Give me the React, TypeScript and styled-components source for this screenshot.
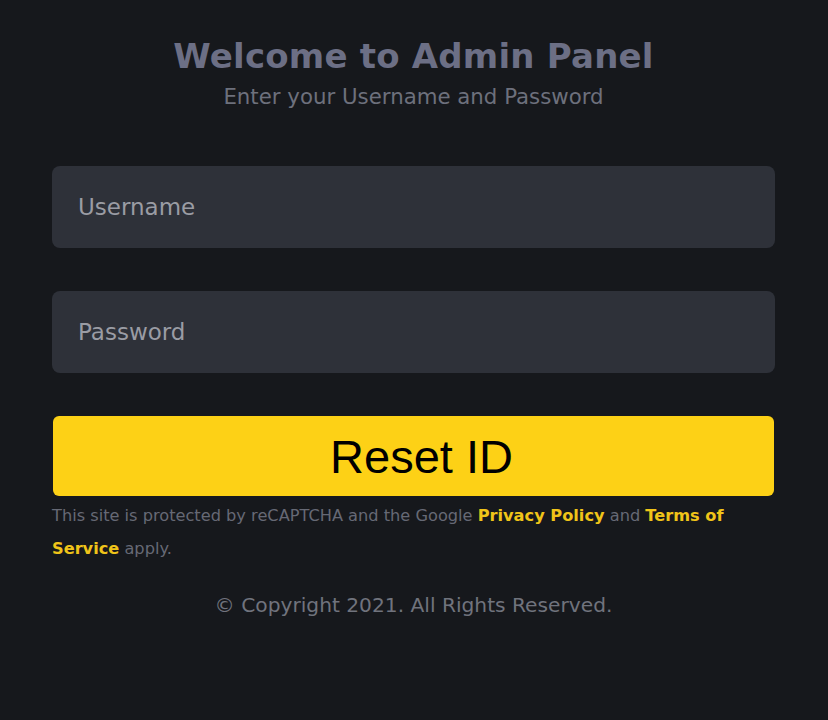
import React from "react";
import styled, { createGlobalStyle } from "styled-components";

const Global = createGlobalStyle`
  html, body { margin: 0; padding: 0; background: #16181c; }
  body { font-family: "DejaVu Sans", "Noto Sans", sans-serif; }
  * { box-sizing: border-box; }
`;

const Page = styled.div`
  min-height: 720px;
  background: #16181c;
  padding: 36px 53px 0 52px;
  display: flex;
  flex-direction: column;
`;

const Header = styled.div`
  display: flex;
  flex-direction: column;
  align-items: center;
`;

const Title = styled.h1`
  margin: 0;
  font-size: 34px;
  font-weight: 600;
  line-height: 40px;
  color: #6c6f85;
  letter-spacing: 0.2px;
`;

const Subtitle = styled.p`
  margin: 8px 0 0;
  font-size: 21.3px;
  line-height: 26px;
  color: #6d707c;
`;

const Form = styled.form`
  margin-top: 56px;
  display: flex;
  flex-direction: column;
  gap: 43px;
`;

const Input = styled.input`
  width: 100%;
  height: 82px;
  border: none;
  outline: none;
  border-radius: 8px;
  background: #2e3139;
  padding: 0 26px;
  font-family: "DejaVu Sans", sans-serif;
  font-size: 23px;
  color: #d0d2d8;
  &::placeholder { color: #9a9ca4; }
`;

const Button = styled.button`
  width: 721px;
  margin-left: 1px;
  height: 80px;
  border: none;
  border-radius: 6px;
  background: #fdd116;
  color: #000;
  padding: 0 0 0 16px;
  font-family: "Liberation Sans", Arial, sans-serif;
  font-size: 47px;
  cursor: pointer;
`;

const Notice = styled.p`
  margin: 3px 0 0;
  font-size: 16.2px;
  line-height: 33px;
  color: #666975;
  letter-spacing: 0;
`;

const Link = styled.a`
  color: #f0c419;
  font-weight: 700;
  text-decoration: none;
`;

const Copyright = styled.p`
  margin: 27px 0 0;
  text-align: center;
  font-size: 20.2px;
  line-height: 26px;
  color: #70737d;
`;

export default function App() {
  return (
    <>
      <Global />
      <Page>
        <Header>
          <Title>Welcome to Admin Panel</Title>
          <Subtitle>Enter your Username and Password</Subtitle>
        </Header>
        <Form onSubmit={(e) => e.preventDefault()}>
          <Input placeholder="Username" />
          <Input placeholder="Password" type="password" />
          <Button type="submit">Reset ID</Button>
        </Form>
        <Notice>
          This site is protected by reCAPTCHA and the Google <Link href="#">Privacy Policy</Link> and{" "}
          <Link href="#">Terms of Service</Link> apply.
        </Notice>
        <Copyright>© Copyright 2021. All Rights Reserved.</Copyright>
      </Page>
    </>
  );
}
